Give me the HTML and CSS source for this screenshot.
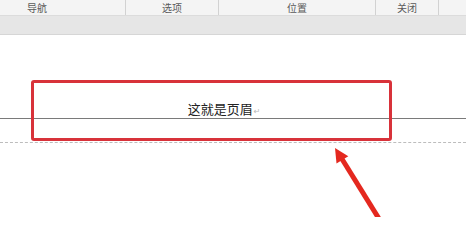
FILE: index.html
```html
<!DOCTYPE html>
<html lang="zh">
<head>
<meta charset="utf-8">
<link rel="stylesheet" href="styles.css">
</head>
<body>
<div class="screen">
  <div class="tabs">
    <div class="tab tab-nav">导航</div>
    <div class="tab tab-opt">选项</div>
    <div class="tab tab-pos">位置</div>
    <div class="tab tab-close">关闭</div>
    <div class="tab-rest"></div>
  </div>
  <div class="band"></div>
  <div class="page">
    <p class="header-line">这就是页眉<span class="para-mark">↵</span></p>
    <div class="header-bound"></div>
  </div>
  <div class="callout"></div>
  <svg class="arrow" width="466" height="217" viewBox="0 0 466 217">
    <line x1="342" y1="159" x2="381" y2="222" stroke="#e4281f" stroke-width="5"/>
    <polygon points="335,148 336.5,163.6 348.3,156.2" fill="#e4281f"/>
  </svg>
</div>
</body>
</html>
```
FILE: styles.css
```css
html, body {
  margin: 0;
  padding: 0;
  background: #ffffff;
}
.screen {
  position: relative;
  width: 466px;
  height: 217px;
  overflow: hidden;
  font-family: "Noto Sans CJK SC", "Noto Sans", sans-serif;
}
.tabs {
  display: flex;
  height: 15px;
  background: #f4f4f4;
  border-bottom: 1px solid #dcdcdc;
}
.tab {
  box-sizing: border-box;
  height: 15px;
  font-size: 10px;
  line-height: 16px;
  color: #5a5a5a;
  text-align: center;
  border-right: 1px solid #d2d2d2;
}
.tab-nav { width: 126px; padding-right: 51px; }
.tab-opt { width: 93px; }
.tab-pos { width: 157px; }
.tab-close { width: 63px; }
.tab-rest { flex: 1; }
.band {
  height: 18px;
  background: #e6e6e6;
  border-bottom: 1px solid #d6d6d6;
}
.page {
  padding-top: 65px;
}
.header-line {
  margin: 0;
  height: 16px;
  padding-bottom: 2px;
  border-bottom: 1px solid #7a7a7a;
  font-size: 13px;
  line-height: 17px;
  color: #222222;
  text-align: center;
  padding-right: 18px;
}
.para-mark {
  font-family: "DejaVu Sans", sans-serif;
  font-size: 8px;
  color: #b8b8b8;
  margin-left: 1px;
}
.header-bound {
  margin-top: 23px;
  border-top: 1px dashed #bdbdbd;
}
.callout {
  position: absolute;
  left: 31px;
  top: 80px;
  width: 355px;
  height: 55px;
  border: 3px solid #d8323a;
  border-radius: 3px;
}
.arrow {
  position: absolute;
  left: 0;
  top: 0;
}
```
